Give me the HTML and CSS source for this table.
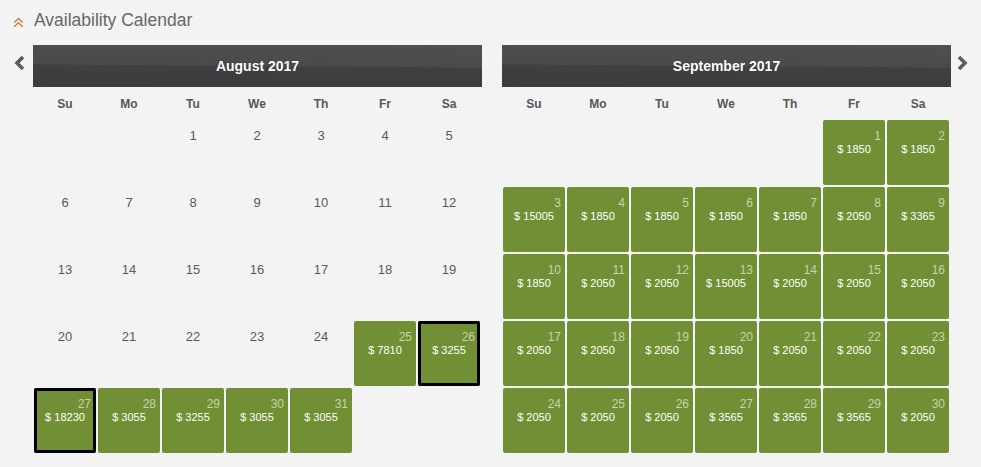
FILE: index.html
```html
<!DOCTYPE html>
<html>
<head>
<meta charset="utf-8">
<link rel="stylesheet" href="styles.css">
</head>
<body>
<div class="title">
  <svg class="title-icon" width="11" height="11" viewBox="0 0 11 11"><path d="M1.2 5.5 L5.5 1.5 L9.8 5.5 M1.2 9.8 L5.5 5.8 L9.8 9.8" fill="none" stroke="#c8843c" stroke-width="1.5"/></svg>
  <span class="title-text">Availability Calendar</span>
</div>
<div class="cal-row">
  <div class="nav nav-prev"><svg width="12" height="16" viewBox="0 0 12 16"><path d="M10 2 L4 8 L10 14" fill="none" stroke="#5c5c5c" stroke-width="3.6"/></svg></div>
  <div class="month">
    <div class="month-head">August 2017</div>
    <div class="dow"><span>Su</span><span>Mo</span><span>Tu</span><span>We</span><span>Th</span><span>Fr</span><span>Sa</span></div>
    <div class="days">
      <div class="day"></div><div class="day"></div><div class="day">1</div><div class="day">2</div><div class="day">3</div><div class="day">4</div><div class="day">5</div>
      <div class="day">6</div><div class="day">7</div><div class="day">8</div><div class="day">9</div><div class="day">10</div><div class="day">11</div><div class="day">12</div>
      <div class="day">13</div><div class="day">14</div><div class="day">15</div><div class="day">16</div><div class="day">17</div><div class="day">18</div><div class="day">19</div>
      <div class="day">20</div><div class="day">21</div><div class="day">22</div><div class="day">23</div><div class="day">24</div>
      <div class="day avail"><span class="num">25</span><span class="price">$ 7810</span></div>
      <div class="day avail sel"><span class="num">26</span><span class="price">$ 3255</span></div>
      <div class="day avail sel"><span class="num">27</span><span class="price">$ 18230</span></div>
      <div class="day avail"><span class="num">28</span><span class="price">$ 3055</span></div>
      <div class="day avail"><span class="num">29</span><span class="price">$ 3255</span></div>
      <div class="day avail"><span class="num">30</span><span class="price">$ 3055</span></div>
      <div class="day avail"><span class="num">31</span><span class="price">$ 3055</span></div>
      <div class="day"></div><div class="day"></div>
    </div>
  </div>
  <div class="gap"></div>
  <div class="month">
    <div class="month-head">September 2017</div>
    <div class="dow"><span>Su</span><span>Mo</span><span>Tu</span><span>We</span><span>Th</span><span>Fr</span><span>Sa</span></div>
    <div class="days">
      <div class="day"></div><div class="day"></div><div class="day"></div><div class="day"></div><div class="day"></div>
      <div class="day avail"><span class="num">1</span><span class="price">$ 1850</span></div>
      <div class="day avail"><span class="num">2</span><span class="price">$ 1850</span></div>
      <div class="day avail"><span class="num">3</span><span class="price">$ 15005</span></div>
      <div class="day avail"><span class="num">4</span><span class="price">$ 1850</span></div>
      <div class="day avail"><span class="num">5</span><span class="price">$ 1850</span></div>
      <div class="day avail"><span class="num">6</span><span class="price">$ 1850</span></div>
      <div class="day avail"><span class="num">7</span><span class="price">$ 1850</span></div>
      <div class="day avail"><span class="num">8</span><span class="price">$ 2050</span></div>
      <div class="day avail"><span class="num">9</span><span class="price">$ 3365</span></div>
      <div class="day avail"><span class="num">10</span><span class="price">$ 1850</span></div>
      <div class="day avail"><span class="num">11</span><span class="price">$ 2050</span></div>
      <div class="day avail"><span class="num">12</span><span class="price">$ 2050</span></div>
      <div class="day avail"><span class="num">13</span><span class="price">$ 15005</span></div>
      <div class="day avail"><span class="num">14</span><span class="price">$ 2050</span></div>
      <div class="day avail"><span class="num">15</span><span class="price">$ 2050</span></div>
      <div class="day avail"><span class="num">16</span><span class="price">$ 2050</span></div>
      <div class="day avail"><span class="num">17</span><span class="price">$ 2050</span></div>
      <div class="day avail"><span class="num">18</span><span class="price">$ 2050</span></div>
      <div class="day avail"><span class="num">19</span><span class="price">$ 2050</span></div>
      <div class="day avail"><span class="num">20</span><span class="price">$ 1850</span></div>
      <div class="day avail"><span class="num">21</span><span class="price">$ 2050</span></div>
      <div class="day avail"><span class="num">22</span><span class="price">$ 2050</span></div>
      <div class="day avail"><span class="num">23</span><span class="price">$ 2050</span></div>
      <div class="day avail"><span class="num">24</span><span class="price">$ 2050</span></div>
      <div class="day avail"><span class="num">25</span><span class="price">$ 2050</span></div>
      <div class="day avail"><span class="num">26</span><span class="price">$ 2050</span></div>
      <div class="day avail"><span class="num">27</span><span class="price">$ 3565</span></div>
      <div class="day avail"><span class="num">28</span><span class="price">$ 3565</span></div>
      <div class="day avail"><span class="num">29</span><span class="price">$ 3565</span></div>
      <div class="day avail"><span class="num">30</span><span class="price">$ 2050</span></div>
    </div>
  </div>
  <div class="nav nav-next"><svg width="12" height="16" viewBox="0 0 12 16"><path d="M2 2 L8 8 L2 14" fill="none" stroke="#5c5c5c" stroke-width="3.6"/></svg></div>
</div>
</body>
</html>
```
FILE: styles.css
```css
html, body {
  margin: 0;
  padding: 0;
  background: #f3f3f3;
  font-family: "Liberation Sans", Arial, sans-serif;
}

.title {
  display: flex;
  align-items: center;
  padding: 10px 0 0 13px;
  height: 20px;
}

.title-icon {
  display: block;
  width: 11px;
  height: 11px;
  margin-right: 10px;
  margin-top: 4px;
}

.title-text {
  font-size: 17.5px;
  line-height: 20px;
  color: #676767;
}

.cal-row {
  display: flex;
  align-items: flex-start;
  margin-top: 15px;
  padding-left: 13px;
}

.nav {
  width: 20px;
  padding-top: 10px;
}

.nav svg {
  display: block;
}

.nav-next {
  padding-left: 6px;
}

.gap {
  width: 20px;
}

.month {
  width: 449px;
}

.month-head {
  height: 42px;
  line-height: 42px;
  text-align: center;
  color: #fff;
  font-weight: bold;
  font-size: 14px;
  text-shadow: 0 0 1px rgba(0,0,0,0.4);
  background: linear-gradient(180.45deg, #4f4f4f 0%, #4a4a4a 49%, #404040 51%, #3b3b3b 100%);
}

.dow {
  display: grid;
  grid-template-columns: repeat(7, 62px);
  column-gap: 2px;
  padding-left: 1px;
  height: 33px;
}

.dow span {
  text-align: center;
  font-size: 12px;
  font-weight: bold;
  color: #575757;
  padding-top: 10px;
  line-height: 15px;
}

.days {
  display: grid;
  grid-template-columns: repeat(7, 62px);
  grid-auto-rows: 65px;
  gap: 2px;
  padding-left: 1px;
}

.day {
  text-align: center;
  font-size: 13px;
  line-height: 15px;
  padding-top: 8px;
  color: #5a5a5a;
  box-sizing: border-box;
}

.day.avail {
  background: #718f34;
  border-radius: 2px;
  padding-top: 9px;
  display: flex;
  flex-direction: column;
}

.day.sel {
  box-shadow: inset 0 0 0 3px #000;
}

.num {
  text-align: right;
  font-size: 12px;
  line-height: 14px;
  padding-right: 4px;
  color: #c7d3ab;
}

.sel .num {
  padding-right: 5px;
}

.price {
  text-align: center;
  font-size: 11px;
  line-height: 13px;
  color: #ffffff;
}
```
